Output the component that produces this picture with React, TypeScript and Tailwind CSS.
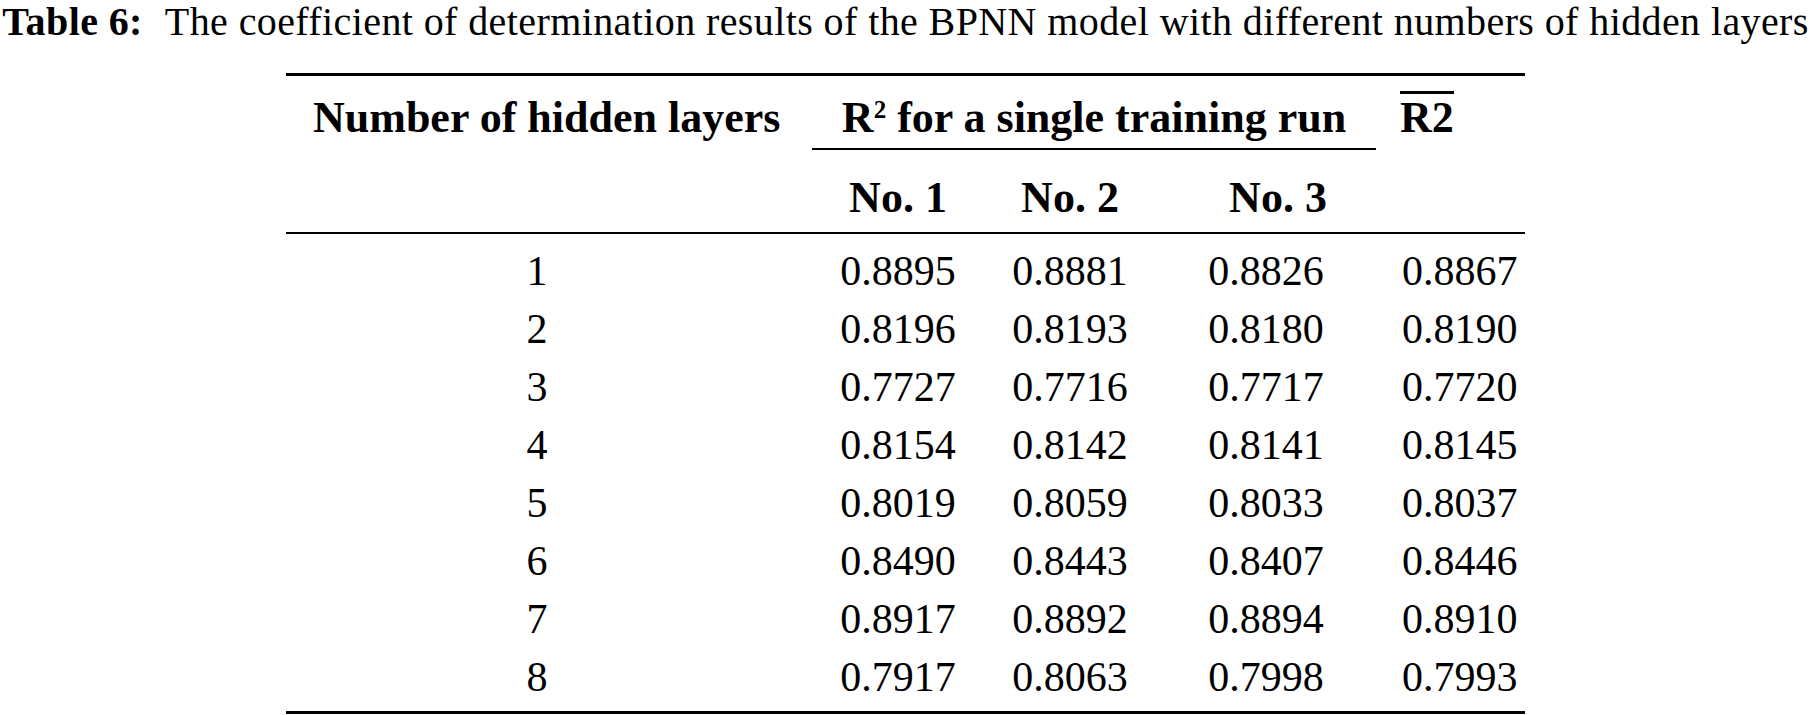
import React from "react";

const rows: [string, string, string, string, string][] = [
  ["1", "0.8895", "0.8881", "0.8826", "0.8867"],
  ["2", "0.8196", "0.8193", "0.8180", "0.8190"],
  ["3", "0.7727", "0.7716", "0.7717", "0.7720"],
  ["4", "0.8154", "0.8142", "0.8141", "0.8145"],
  ["5", "0.8019", "0.8059", "0.8033", "0.8037"],
  ["6", "0.8490", "0.8443", "0.8407", "0.8446"],
  ["7", "0.8917", "0.8892", "0.8894", "0.8910"],
  ["8", "0.7917", "0.8063", "0.7998", "0.7993"],
];

export default function App() {
  return (
    <div className="w-[1811px] h-[715px] bg-white text-black font-['Liberation_Serif',serif] overflow-hidden">
      <div className="h-[44px] leading-[44px] text-[40px] text-center whitespace-nowrap tracking-[0.4px]">
        <span className="font-bold">Table 6:</span>
        <span className="ml-[22px]">
          The coefficient of determination results of the BPNN model with different numbers of hidden layers
        </span>
      </div>

      <div className="mt-[29px] mx-auto w-[1239px]">
        <div className="border-t-[3px] border-b-2 border-black pt-[12px] font-bold text-[44px]">
          <div className="grid grid-cols-[526px_172px_172px_220px_149px]">
            <div className="h-[62px] leading-[60px] pl-[27px] whitespace-nowrap">Number of hidden layers</div>
            <div className="col-span-3 h-[62px] leading-[60px] border-b-2 border-black text-center whitespace-nowrap">
              R
              <span className="relative -top-[14px] text-[25px] leading-none align-baseline">2</span> for a single training run
            </div>
            <div className="h-[62px] leading-[60px] pl-[24px]">
              <span className="inline-block leading-[48px] border-t-[3px] border-black">R2</span>
            </div>

            <div className="pt-[18px] pb-[4px] leading-[60px]"></div>
            <div className="pt-[18px] pb-[4px] leading-[60px] text-center whitespace-nowrap">No. 1</div>
            <div className="pt-[18px] pb-[4px] leading-[60px] text-center whitespace-nowrap">No. 2</div>
            <div className="pt-[18px] pb-[4px] leading-[60px] text-center whitespace-nowrap pl-[24px]">No. 3</div>
            <div className="pt-[18px] pb-[4px] leading-[60px]"></div>
          </div>
        </div>

        <div className="border-b-[3px] border-black pt-[8px] pb-[5px] text-[42px]">
          {rows.map((r) => (
            <div key={r[0]} className="grid grid-cols-[526px_172px_172px_220px_149px] leading-[58px] h-[58px]">
              <div className="text-center pr-[24px]">{r[0]}</div>
              <div className="text-center">{r[1]}</div>
              <div className="text-center">{r[2]}</div>
              <div className="text-center">{r[3]}</div>
              <div className="text-left pl-[26px]">{r[4]}</div>
            </div>
          ))}
        </div>
      </div>
    </div>
  );
}
